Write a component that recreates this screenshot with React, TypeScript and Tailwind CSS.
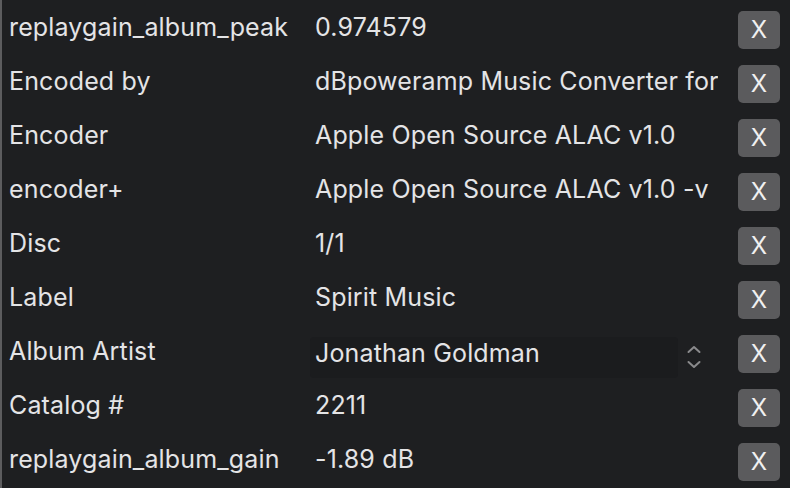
import React from "react";

const rows: [string, string][] = [
  ["replaygain_album_peak", "0.974579"],
  ["Encoded by", "dBpoweramp Music Converter for macOS"],
  ["Encoder", "Apple Open Source ALAC v1.0"],
  ["encoder+", "Apple Open Source ALAC v1.0 -v"],
  ["Disc", "1/1"],
  ["Label", "Spirit Music"],
  ["Album Artist", "Jonathan Goldman"],
  ["Catalog #", "2211"],
  ["replaygain_album_gain", "-1.89 dB"],
];

function Chevrons() {
  return (
    <svg width="16" height="26" viewBox="0 0 16 26" fill="none" stroke="#8a8a8c" strokeWidth="2" strokeLinecap="round" strokeLinejoin="round">
      <path d="M2.5 8 L8 3 L13.5 8" />
      <path d="M2.5 18 L8 23 L13.5 18" />
    </svg>
  );
}

export default function App() {
  return (
    <div
      className="w-[790px] h-[488px] bg-[#1e1f21] border-l-2 border-[#5c5c5e] overflow-hidden pt-[3px] text-[#e4e4e6] tracking-[0.15px]"
      style={{ fontFamily: "Inter, 'Noto Sans', sans-serif" }}
    >
      {rows.map(([label, value], i) => {
        const combo = label === "Album Artist";
        return (
          <div key={i} className="flex items-center h-[54px]">
            <div className="w-[305px] shrink-0 pl-[7px] text-[25px] leading-none pb-[6px] whitespace-nowrap">
              {label}
            </div>
            {combo ? (
              <div className="w-[368px] shrink-0 h-[41px] ml-[3px] mt-[6px] flex items-center bg-[#1b1c1e] rounded-[4px] pl-[5px]">
                <span className="text-[25px] leading-none pb-[7px] whitespace-nowrap">{value}</span>
              </div>
            ) : (
              <div className="w-[403px] shrink-0 ml-[8px] text-[25px] leading-none pb-[6px] whitespace-nowrap overflow-hidden">
                {value}
              </div>
            )}
            {combo && (
              <div className="ml-[8px] mt-[6px] shrink-0">
                <Chevrons />
              </div>
            )}
            <div className="ml-auto mr-[10px] w-[42px] h-[38px] shrink-0 rounded-[5px] bg-[#5b5b5d] flex items-center justify-center text-[24px] leading-none text-[#f0f0f0] tracking-normal">
              X
            </div>
          </div>
        );
      })}
    </div>
  );
}
